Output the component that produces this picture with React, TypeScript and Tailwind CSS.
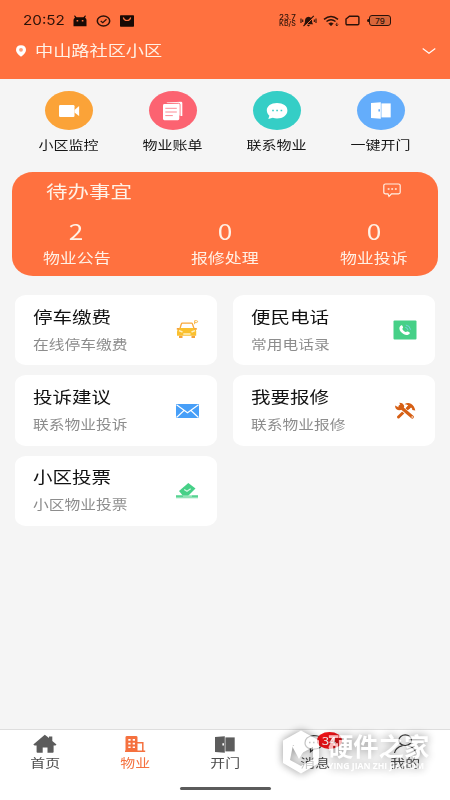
import type { ReactNode } from 'react';
import { clsx } from 'clsx';

type TextProps = { children: ReactNode; className?: string };

// Glyphs on this screen are wider than tall
function Wide({ children, className }: TextProps) {
  return <span className={clsx('inline-block scale-x-[1.22] whitespace-nowrap', className)}>{children}</span>;
}

const VideoIcon = () => (
  <svg width="22" height="14" viewBox="0 0 22 14" fill="#fff">
    <rect x="1" y="1" width="15.5" height="12" rx="1.2" />
    <path d="M16.5 6 21.1 2v10L16.5 8.5z" />
  </svg>
);

const BillIcon = () => (
  <svg width="22" height="20" viewBox="0 0 22 20">
    <path d="M4.5 1.5 19 .8q1.3 0 1.3 1.2v13H18" fill="#fff" />
    <path d="M18 16V3.5q0-1.3-1.5-1.2L3 2.6" fill="none" stroke="#fc6371" strokeWidth="0.9" />
    <rect x="1" y="3" width="16.3" height="16.2" rx="1.4" fill="#fff" />
    <path d="M3.3 7.3h11.5M3.3 11h11.5M3.3 14.6h7.5" stroke="#fc8a94" strokeWidth="1" />
  </svg>
);

const BubbleIcon = () => (
  <svg width="22" height="18" viewBox="0 0 22 18">
    <path d="M11 1C5 1 .8 4.2.8 8.2c0 2.5 1.3 4.4 2.6 5.6L2.3 17l4.5-1.2c1.2.4 2.7.6 4.2.6 6 0 10.4-3.5 10.4-8S17 1 11 1z" fill="#fff" />
    <path d="M6.2 8.5h1.6M10.3 8.5h1.6M14.6 8.5h1.6" stroke="#35cec6" strokeWidth="1.7" />
  </svg>
);

const DoorIcon = ({ color, knob }: { color: string; knob: string }) => (
  <svg width="20" height="17" viewBox="0 0 20 17">
    <path d="M0 1 9.8.3v16.4L0 16z" fill={color} />
    <path d="M10.4 1.4h9.3v14h-9.3z" fill={color} />
    <path d="M8.2 7.2v2.4" stroke={knob} strokeWidth="1.6" />
  </svg>
);

const CarIcon = () => (
  <svg width="24" height="20" viewBox="0 0 24 20">
    <path d="M5 8.5 6.3 4q.2-.8 1-.8h9.2q.8 0 1 .8L19 8.5" fill="none" stroke="#f9a83c" strokeWidth="1.3" />
    <path d="M4.2 8h15.6q1.4 1.5 1.4 3.5v4.3H2v-4.3Q2 9.5 4.2 8z" fill="#fac02e" />
    <path d="M1.8 8h2.5v1.8H1.8zM19.3 8h2.5v1.8h-2.5zM4 15.7h3.5v2.2H4zM16.5 15.7H20v2.2h-3.5z" fill="#f5a43b" />
    <path d="M4 10.6 7.5 12M20 10.6 16.5 12M8.3 14h7.2" stroke="#fff0c2" strokeWidth="1.5" />
    <path d="M19.6 4.2V.7h2q1.2 0 1 1.1-.2.8-1.2.8h-1.5" fill="none" stroke="#f9b94d" strokeWidth="1" />
  </svg>
);

const PhoneIcon = () => (
  <svg width="24" height="20" viewBox="0 0 24 20">
    <rect x="0.5" y="0.5" width="23" height="19" rx="1" fill="#46d087" />
    <path d="M8 5.5C8.7 5 9.5 5.5 10 7c.4 1-.7 1.3-.6 2 .3 1.2 2 2.7 3.1 3 .8.2 1.4-1 2.4-.5 1.5.6 2.3 1.2 1.8 2-1.1 1.7-3.6 2-5.8.7-2.5-1.4-4.4-3.6-4.5-5.8 0-1.3.6-2.3 1.6-2.9z" fill="#fff" />
    <path d="M12.3 7.4q2.3.3 2.7 2.7M12.8 5q4.3.6 4.7 4.7" fill="none" stroke="#78cfe0" strokeWidth="1" />
  </svg>
);

const MailIcon = () => (
  <svg width="24" height="16" viewBox="0 0 24 16">
    <rect x="1" y="1" width="23" height="14" fill="#479ff8" />
    <path d="M1.5 1.8 12.5 9.8 23.5 1.8M1.5 14.5 9 7.5M23.5 14.5 16 7.5" fill="none" stroke="#fff" strokeWidth="1.1" />
  </svg>
);

const RepairIcon = () => (
  <svg width="24" height="20" viewBox="0 0 24 20">
    <path d="M5.5 16 16 6" stroke="#d65f14" strokeWidth="3" strokeLinecap="round" />
    <path d="M7.5 6 19 16.2" stroke="#fff" strokeWidth="4.6" />
    <path d="M7 5.5 19.3 16" stroke="#d65f14" strokeWidth="3.2" strokeLinecap="round" />
    <path d="M2 4.5 5.5 6.3 7.6 4.7 6.3 1.7Q9.5 1.5 10.8 4T9.3 8.3Q6 10.3 3.5 8.2 2 6.8 2 4.5z" fill="#d65f14" />
    <path d="M11.5 3.3Q14.5 1 18 2.7 21.5 5 22.3 9.5L19.3 9Q19.5 7.3 18 6.5L15.5 8.7 13.3 6.5 15.3 4.5Q13.5 3.3 11.5 3.3z" fill="#d65f14" />
    <circle cx="19.2" cy="16" r="0.8" fill="#fff" />
  </svg>
);

const VoteIcon = () => (
  <svg width="24" height="18" viewBox="0 0 24 18">
    <path d="M13.3 1 20.5 6.5 12.5 14.5H8.5L4 9z" fill="#46d087" />
    <path d="M1 14.8H23" stroke="#8fe2b6" strokeWidth="3" />
    <path d="M1 14.1H8M17 14.1h6" stroke="#46d087" strokeWidth="1.4" />
    <path d="M9.2 7.5 12 9.3 15.7 6.7" fill="none" stroke="#d4f5e3" strokeWidth="1.2" />
  </svg>
);

const HomeIcon = () => (
  <svg width="24" height="20" viewBox="0 0 24 20">
    <path d="M11.8.8 16 4V2.5h3.3V7L23.5 10.5 22.5 11.5H20.6V18q0 .8-.9.8H14.500V13.500H9.700V18.800H4.500q-.9 0-.9-.8V11.500H1.500L.3 10.500z" fill="#5c5c5c" />
  </svg>
);

const EstateIcon = () => (
  <svg width="22" height="18" viewBox="0 0 22 18">
    <path d="M1.5 16V2.4Q1.5 1 3 1h9q1.5 0 1.5 1.4V16z" fill="#f5713f" />
    <path d="M4.3 4.9h2.3M8.7 4.9H11M4.3 8.6h2.3M8.7 8.6H11M4.3 12.3h2.3M8.7 12.3H11" stroke="#fff" strokeWidth="1.6" />
    <path d="M13 7.8h5.8V16M1 16.2h20.2" fill="none" stroke="#f5713f" strokeWidth="1.5" />
  </svg>
);

const MessageIcon = () => (
  <svg width="24" height="20" viewBox="0 0 24 20" fill="none" stroke="#3a3a3a" strokeWidth="1.2">
    <path d="M18 12.5Q16 15 11 15L7.5 17.8V14.8Q2 13.5 2 9 2 2.5 10.5 1.5 16 1.5 18 4" />
    <path d="M6 8.5h1.5M10 8.5h1.5M14 8.5h1.5" strokeWidth="1.7" />
  </svg>
);

const MeIcon = () => (
  <svg width="24" height="20" viewBox="0 0 24 20" fill="none" stroke="#3a3a3a" strokeWidth="1.2">
    <ellipse cx="12.2" cy="6.2" rx="6.3" ry="5.3" />
    <path d="M1.5 19Q2.5 13.5 9.5 11.6M15 11.6Q22 13.5 23 19" />
  </svg>
);

const SHORTCUTS = [
  { label: '小区监控', color: 'bg-[#fba338]', icon: <VideoIcon /> },
  { label: '物业账单', color: 'bg-[#fc6371]', icon: <BillIcon /> },
  { label: '联系物业', color: 'bg-[#35cec6]', icon: <BubbleIcon /> },
  { label: '一键开门', color: 'bg-[#64adfb]', icon: <DoorIcon color="#fff" knob="#64adfb" /> },
];

const TODOS = [
  { label: '物业公告', count: 2 },
  { label: '报修处理', count: 0 },
  { label: '物业投诉', count: 0 },
];

const SERVICES = [
  { title: '停车缴费', desc: '在线停车缴费', icon: <CarIcon /> },
  { title: '便民电话', desc: '常用电话录', icon: <PhoneIcon /> },
  { title: '投诉建议', desc: '联系物业投诉', icon: <MailIcon /> },
  { title: '我要报修', desc: '联系物业报修', icon: <RepairIcon /> },
  { title: '小区投票', desc: '小区物业投票', icon: <VoteIcon /> },
];

const TABS = [
  { label: '首页', icon: <HomeIcon /> },
  { label: '物业', icon: <EstateIcon />, active: true },
  { label: '开门', icon: <DoorIcon color="#5c5c5c" knob="#fff" /> },
  { label: '消息', icon: <MessageIcon />, badge: 34 },
  { label: '我的', icon: <MeIcon /> },
];

function StatusBar() {
  return (
    <div className="flex h-[41px] items-center pl-[23px] pr-[59px] font-['Inter',sans-serif] text-[#2b1209]">
      <span className="w-[50px] text-[13.5px] leading-none">
        <span className="inline-block origin-left scale-x-[1.13]">20:52</span>
      </span>
      <div className="flex items-center gap-[9px]">
        <svg width="14" height="12" viewBox="0 0 14 12">
          <path d="M.5 11.3V5Q.5 3.5 2 2.7L1 .8 2 .4 3.5 2.2h7L12 .4l1 .4-1 1.9q1.5.8 1.5 2.3v6.3z" fill="#180a05" />
          <path d="M3.6 5.7h1.6M8.8 5.7h1.6" stroke="#ff713f" strokeWidth="1.4" />
        </svg>
        <svg width="15" height="12" viewBox="0 0 15 12" fill="none" stroke="#2b1209">
          <ellipse cx="7.5" cy="6" rx="6.2" ry="5" strokeWidth="1.5" />
          <path d="M4.7 6 6.8 7.7 10.5 4.3" strokeWidth="1.3" />
        </svg>
        <svg width="14" height="12" viewBox="0 0 14 12">
          <rect y="0.3" width="14" height="11.4" rx="0.7" fill="#180a05" />
          <path d="M3.3 2.5Q4 5.5 7 5.5t3.7-3" fill="none" stroke="#ff713f" strokeWidth="1.2" />
        </svg>
      </div>
      <div className="ml-auto flex items-center">
        <span className="w-[21px] text-[7px] leading-[6px] font-medium">
          <span className="block w-4 origin-left scale-x-[1.15]">23.7</span>
          <span className="block w-4 origin-left scale-x-[1.02]">KB/S</span>
        </span>
        <svg className="mr-[6px]" width="17" height="12" viewBox="0 0 17 12">
          <path d="M4 9.2q1-.8 1-3.5 0-3.5 3.5-4 3.5.5 3.5 4 0 2.7 1.2 3.5zM6.8 10h3.4l-1.7 1.5z" fill="#2b1209" />
          <path d="M4.5 11.5 15 1" stroke="#ff713f" strokeWidth="1" />
          <path d="M3.5 11 13.8.8M1 3.5v4.5M2.7 4.5v2.5M16 3.5v4.5M14.3 4.5v2.5" stroke="#2b1209" strokeWidth="1.1" />
        </svg>
        <svg className="mr-[5px]" width="17" height="12" viewBox="0 0 17 12" fill="none" stroke="#2b1209">
          <path d="M1 4.3Q8 -1.2 15 4.3M3.5 6.5Q8 3 12.5 6.5" strokeWidth="1.5" />
          <path d="M5.8 8.5Q8 7 10.2 8.5L8 10.8z" fill="#2b1209" strokeWidth="0.6" />
          <path d="M13.8 7.8v3M12.5 9.6l1.3 1.3 1.3-1.3" strokeWidth="0.9" />
        </svg>
        <svg className="mr-[7px]" width="15" height="11" viewBox="0 0 15 11">
          <path d="M4.5 1.2h8.2q1.2 0 1.2 1.2v6.2q0 1.2-1.2 1.2H2.2Q1 9.8 1 8.600V4z" fill="none" stroke="#2b1209" strokeWidth="1.4" />
        </svg>
        <span className="h-[3px] w-[2px] rounded-l bg-[#2b1209]" />
        <span className="flex h-[10.5px] w-[22px] items-center justify-center rounded-[3px] border border-[#2b1209] bg-[#d9663a] text-[8px] leading-none font-medium">
          79
        </span>
      </div>
    </div>
  );
}

function Header() {
  return (
    <header className="h-[78.5px] bg-[#ff713f]">
      <StatusBar />
      <div className="flex h-5 items-center pl-[15px] pr-[14px]">
        <svg width="12" height="12" viewBox="0 0 12 12">
          <path d="M6 .3Q11 .5 11 5 11 8 6 11.8 1 8 1 5 1 .5 6 .3z" fill="#fff" />
          <circle cx="6" cy="4.8" r="1.9" fill="#ff9c78" />
        </svg>
        <Wide className="-mt-[2px] ml-[8px] origin-left text-[14.9px] leading-5 text-[#fff1e6]">中山路社区小区</Wide>
        <svg className="ml-auto" width="14" height="8" viewBox="0 0 14 8">
          <path d="M.7 1.5 7 6.3 13.3 1.5" fill="none" stroke="#fff" strokeWidth="1.1" />
        </svg>
      </div>
    </header>
  );
}

function TodoPanel() {
  return (
    <section className="mx-[12px] mt-[18px] h-[104px] rounded-[21px/19px] bg-[#ff713f] text-[#fff1e6]">
      <div className="flex h-[37px] items-center justify-between pr-[37px] pl-[34px]">
        <Wide className="origin-left text-[17.6px] leading-6">待办事宜</Wide>
        <svg width="18" height="15" viewBox="0 0 18 15" fill="none" stroke="#fff1e6" strokeWidth="1.2">
          <path d="M2.5 1h13q1.7 0 1.7 1.5v6.8q0 1.5-1.7 1.5H8.5L6 13.5 5 10.8H2.5Q.8 10.8.8 9.3V2.5Q.8 1 2.5 1z" />
          <path d="M4.7 6h1.8M8.3 6h1.8M11.9 6h1.8" strokeWidth="1.5" />
        </svg>
      </div>
      <div className="-mx-[10px] grid grid-cols-3">
        {TODOS.map((item) => (
          <div key={item.label} className="flex flex-col items-center">
            <Wide className="text-[21.5px] leading-[44px]">{item.count}</Wide>
            <Wide className="-mt-[6px] text-[13.9px] leading-5">{item.label}</Wide>
          </div>
        ))}
      </div>
    </section>
  );
}

function TabBar() {
  return (
    <nav className="mt-auto flex h-[71px] flex-col border-t border-[#dedede] bg-white">
      <div className="grid grid-cols-5 pt-[4px]">
        {TABS.map((tab) => (
          <div key={tab.label} className={clsx('flex flex-col items-center', tab.active ? 'text-[#f5713f]' : 'text-[#4c4c4c]')}>
            <div className="relative flex h-5 items-center">
              {tab.icon}
              {tab.badge && (
                <span className="absolute top-[-2px] left-[14px] flex h-[17px] w-[25px] items-center justify-center rounded-[50%] bg-[#f01318] text-[11px] leading-none text-white">
                  <Wide>{tab.badge}</Wide>
                </span>
              )}
            </div>
            <Wide className="text-[12.2px] leading-[18px]">{tab.label}</Wide>
          </div>
        ))}
      </div>
      <div className="mx-auto mt-auto mb-[10.5px] h-[3px] w-[91px] rounded-full bg-[#5b5b5b]" />
    </nav>
  );
}

function Watermark() {
  return (
    <div className="pointer-events-none absolute top-[730px] left-[282px] opacity-70">
      <div className="flex items-center gap-[8px] text-white drop-shadow-[0_0_4px_rgba(0,0,0,0.6)]">
        <svg width="38" height="44" viewBox="0 0 38 44">
          <path fillRule="evenodd" d="M19 .5 37 10.5V33L19 43.5 1 33V10.5zM11 15 8 30 19 36 31 29V17L20 23z" fill="currentColor" />
          <path d="M10 16 26 14 17 29z" fill="currentColor" />
        </svg>
        <div className="w-[102px] whitespace-nowrap">
          <div className="text-[25.3px] leading-[26px] font-bold">硬件之家</div>
          <div className="mt-[1px] origin-left scale-x-[0.96] font-['Open_Sans',sans-serif] text-[9px] leading-[13px] font-bold">YING JIAN ZHI JIA.COM</div>
        </div>
      </div>
    </div>
  );
}

export default function App() {
  return (
    <div className="relative flex h-[800px] w-[450px] flex-col overflow-hidden bg-[#f5f5f5] font-['Noto_Sans_CJK_SC',sans-serif]">
      <Header />

      {/* Shortcuts */}
      <div className="mx-[17px] mt-[12.5px] grid grid-cols-4">
        {SHORTCUTS.map((item) => (
          <div key={item.label} className="flex flex-col items-center">
            <div className={clsx('flex h-[39px] w-[48px] items-center justify-center rounded-[50%]', item.color)}>{item.icon}</div>
            <Wide className="mt-[6px] text-[12.3px] leading-[18px] text-[#161616]">{item.label}</Wide>
          </div>
        ))}
      </div>

      <TodoPanel />

      {/* Services */}
      <div className="mx-[15px] mt-[19px] grid grid-cols-2 gap-x-[16px] gap-y-[10px]">
        {SERVICES.map((item) => (
          <div key={item.title} className="flex h-[70.4px] items-center justify-between rounded-[11px/9px] bg-white pr-[18px] pl-[18px]">
            <div className="-mt-[3px] flex flex-col items-start">
              <Wide className="origin-left text-[16px] leading-[22px] text-[#111]">{item.title}</Wide>
              <Wide className="mt-[8px] origin-left text-[12.9px] leading-[18px] text-[#8d8d8d]">{item.desc}</Wide>
            </div>
            {item.icon}
          </div>
        ))}
      </div>

      <TabBar />
      <Watermark />
    </div>
  );
}
